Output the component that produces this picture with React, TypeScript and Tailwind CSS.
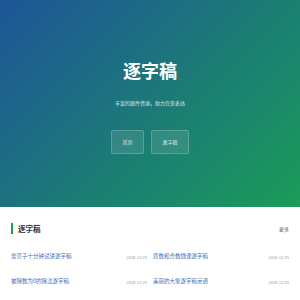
import React from 'react';

const items = [
  { title: '雷贝子十分钟试讲逐字稿', date: '2024-12-25' },
  { title: '质数和合数微课逐字稿', date: '2024-12-25' },
  { title: '被除数为0的除法逐字稿', date: '2024-12-25' },
  { title: '美丽的大象逐字稿英语', date: '2024-12-25' },
];

export default function App() {
  return (
    <div
      className="w-[300px] h-[300px] overflow-hidden bg-white"
      style={{ fontFamily: '"Noto Sans CJK SC", "Noto Sans", sans-serif' }}
    >
      {/* hero */}
      <div className="h-[207px] bg-[linear-gradient(135deg,#1e5599_0%,#1a9c58_100%)] flex flex-col items-center text-white">
        <h1 className="mt-[60px] text-[18px] leading-[20px] font-bold">逐字稿</h1>
        <p className="mt-[20px] text-[5px] leading-[6px] text-white/80">丰富的稿件资源，助力完美表达</p>
        <div className="mt-[24px] flex gap-[7px]">
          <a className="w-[33px] h-[24px] flex items-center justify-center rounded-[2px] bg-white/10 border border-white/20 text-[5px] text-white/80">
            首页
          </a>
          <a className="w-[38px] h-[24px] flex items-center justify-center rounded-[2px] bg-white/10 border border-white/20 text-[5px] text-white/80">
            逐字稿
          </a>
        </div>
      </div>

      {/* list */}
      <div className="px-[11px]">
        <div className="mt-[16px] h-[11px] flex items-center justify-between">
          <div className="flex items-center h-full">
            <span className="w-[2px] h-[11px] bg-[#1a9c58]" />
            <span className="ml-[5px] text-[7.5px] font-bold text-[#333]">逐字稿</span>
          </div>
          <span className="text-[5px] text-[#555]">更多</span>
        </div>
        <div className="mt-[10px] grid grid-cols-2 gap-x-[6px]">
          {items.map((it) => (
            <div key={it.title} className="h-[25px] flex items-center justify-between">
              <span className="text-[5.5px] text-[#3d72b8]">{it.title}</span>
              <span className="text-[4px] text-[#999]">{it.date}</span>
            </div>
          ))}
        </div>
      </div>
    </div>
  );
}
